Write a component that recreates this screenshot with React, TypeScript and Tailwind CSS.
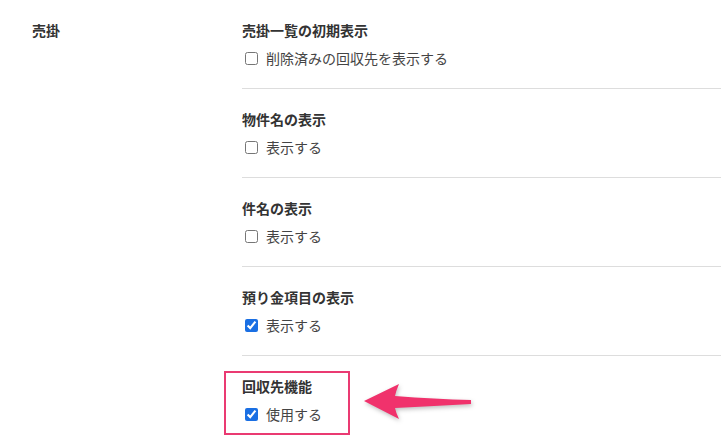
import React from "react";

type Setting = {
  title: string;
  label: string;
  checked: boolean;
};

const settings: Setting[] = [
  { title: "売掛一覧の初期表示", label: "削除済みの回収先を表示する", checked: false },
  { title: "物件名の表示", label: "表示する", checked: false },
  { title: "件名の表示", label: "表示する", checked: false },
  { title: "預り金項目の表示", label: "表示する", checked: true },
  { title: "回収先機能", label: "使用する", checked: true },
];

const SettingRow = ({ title, label, checked, last }: Setting & { last: boolean }) => (
  <div className={`flex flex-col gap-2 py-5 ${last ? "" : "border-b border-[#dddddd]"}`}>
    <p className="text-[14px] leading-5 font-bold text-[#333333]">{title}</p>
    <label className="flex items-center gap-2 text-[14px] leading-5 text-[#444444]">
      <input
        type="checkbox"
        defaultChecked={checked}
        className="ml-[3px] w-[13px] h-[13px] accent-[#1a6fe3]"
      />
      <span>{label}</span>
    </label>
  </div>
);

const App = () => {
  return (
    <div
      className="relative w-[721px] h-[445px] overflow-hidden bg-white"
      style={{ fontFamily: '"Noto Sans CJK JP", "Noto Sans", sans-serif' }}
    >
      <div className="flex">
        <div className="w-[242px] shrink-0 pl-8 py-5">
          <p className="text-[14px] leading-5 font-bold text-[#333333]">売掛</p>
        </div>
        <div className="flex-1 flex flex-col">
          {settings.map((s, i) => (
            <SettingRow key={s.title} {...s} last={i === settings.length - 1} />
          ))}
        </div>
      </div>

      {/* annotation */}
      <div className="absolute left-[224px] top-[371px] w-[126px] h-[64px] border-2 border-[#ea3a72]" />
      <svg
        className="absolute left-[355px] top-[375px]"
        width="125"
        height="50"
        viewBox="0 0 125 50"
        style={{ filter: "drop-shadow(1px 2px 2px rgba(0,0,0,0.25))" }}
      >
        <path
          d="M9 26 L44 9 Q41 16 40 21 Q80 24 116 25 L116 29 Q80 31 40 33 Q41 38 44 44 Z"
          fill="#f0326c"
        />
      </svg>
    </div>
  );
};

export default App;
